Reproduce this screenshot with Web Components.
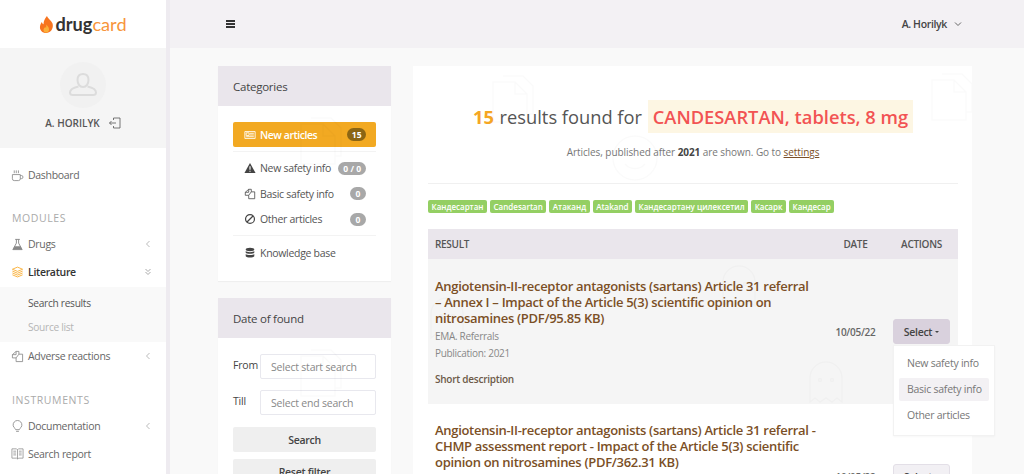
<!DOCTYPE html>
<html lang="en">
<head>
<meta charset="utf-8">
<title>Drugcard</title>
<style>
  html, body { margin: 0; height: 100%; overflow: hidden; }
  body { font-family: "Open Sans", "Noto Sans", sans-serif; color: #444; background: #f9f9f9; }
</style>
</head>
<body>
<dc-app>
  <dc-sidebar slot="side"></dc-sidebar>
  <dc-topbar slot="top"></dc-topbar>
  <dc-filters slot="filters"></dc-filters>
  <dc-results slot="results"></dc-results>
</dc-app>

<script>
// icons are all 14x14 viewbox, drawn with currentColor
const ICONS = {
  cup: '<path d="M1.500 6h8.500v4.500a2 2 0 0 1-2 2H3.500a2 2 0 0 1-2-2zM10 7h1.200a1.600 1.600 0 0 1 0 3.400H10M3.500 1.500v3M5.700 1.500v3M8 1.500v3" fill="none" stroke="currentColor" stroke-width=".9"/>',
  flask: '<path d="M4.500 1.500h5M5.800 1.500v4L2 12.500h10L8.200 5.500v-4" fill="none" stroke="currentColor"/><path d="M4 9h6l2 3.500H2z" fill="currentColor"/>',
  layers: '<path d="M7 1.200l5.500 2.300L7 5.800 1.500 3.500zM1.500 5.500L7 7.800l5.500-2.300M1.500 7.500L7 9.800l5.500-2.300M1.500 9.500L7 11.800l5.500-2.300" fill="none" stroke="currentColor" stroke-width=".9"/>',
  copy: '<path d="M5.500 1.500h3v3h4v8h-7v-4h-4v-3.500zM5.500 1.500v3.500h-4M8.500 4.500l-3 4" fill="none" stroke="currentColor" stroke-width=".9"/>',
  bulb: '<path d="M4.500 10.300a4.700 4.700 0 1 1 5 0c-.4.300-.5.700-.5 1.200H5c0-.5-.1-.9-.5-1.200zM5.500 13.300h3" fill="none" stroke="currentColor" stroke-width=".9"/>',
  book: '<path d="M1 2h5l1 1 1-1h5v10H8l-1 1-1-1H1zM7 3v10M2.500 4.500h3M2.500 6.500h3M2.500 8.500h3M8.500 4.500h3M8.500 6.500h3M8.500 8.500h3" fill="none" stroke="currentColor" stroke-width=".8"/>',
  news: '<path d="M1 3h12v8H1z" fill="none" stroke="currentColor"/><path d="M2.500 4.500h3.500v3H2.500zM7 5h4.500M7 7h4.500M2.500 9h9" stroke="currentColor" fill="none"/>',
  warn: '<path d="M7 1.200l6.500 11.600H.5z" fill="currentColor"/><path d="M7 5v4M7 10.200v1.200" stroke="#fff" stroke-width="1.300"/>',
  ban: '<circle cx="7" cy="7" r="5.200" fill="none" stroke="currentColor" stroke-width="1.400"/><path d="M3.500 10.500l7-7" stroke="currentColor" stroke-width="1.400"/>',
  db: '<ellipse cx="7" cy="3" rx="5" ry="2" fill="currentColor"/><path d="M2 4.800c1 1.600 9 1.600 10 0v2c-1 1.600-9 1.600-10 0zM2 8.200c1 1.600 9 1.600 10 0v2.500c-1 2-9 2-10 0z" fill="currentColor"/>'
};
const icon = (name, size = 14) =>
  `<svg width="${size}" height="${size}" viewBox="0 0 14 14" aria-hidden="true">${ICONS[name]}</svg>`;

// faint doodles printed over the cards, same colour on white and on grey rows
const DOODLE = (x, y) => `<path transform="translate(${x} ${y})" d="M0 6h22l12 12v28H0zM22 6v12h12M10 0h20l10 10v28h-6"/>`;
const GHOST = (x, y) => `<path transform="translate(${x} ${y})" d="M0 40V16a16 16 0 0 1 32 0v24l-5-4-5 4-6-4-6 4-5-4z"/><circle transform="translate(${x} ${y})" cx="10" cy="18" r="1.500"/><circle transform="translate(${x} ${y})" cx="22" cy="18" r="1.500"/>`;

class DcApp extends HTMLElement {
  constructor() {
    super();
    this.attachShadow({ mode: "open" });
  }
  connectedCallback() {
    this.shadowRoot.innerHTML = `
      <style>
        :host { display: grid; grid-template-columns: 170px 1fr; height: 100vh; overflow: hidden; }
        .main { min-width: 0; overflow: hidden; }
        .content { display: grid; grid-template-columns: 173px 559px; gap: 22px; padding: 18px 0 0 48px; }
        .col { min-width: 0; }
      </style>
      <slot name="side"></slot>
      <div class="main">
        <slot name="top"></slot>
        <div class="content">
          <div class="col"><slot name="filters"></slot></div>
          <div class="col"><slot name="results"></slot></div>
        </div>
      </div>`;
  }
}

class DcSidebar extends HTMLElement {
  constructor() {
    super();
    this.attachShadow({ mode: "open" });
  }
  connectedCallback() {
    this.shadowRoot.innerHTML = `
      <style>
        :host { display: block; width: 166px; height: 100%; background: #fff; border-right: 4px solid #eeebf0; color: #666; overflow: hidden; }
        .logo { height: 48px; display: flex; align-items: center; justify-content: center; gap: 1px; font: 700 18.200px/1 Lato, "Open Sans", sans-serif; color: #333; box-sizing: border-box; }
        .logo b { font-weight: 400; color: #f7953b; }
        .user { height: 100px; background: #f5f5f5; box-sizing: border-box; padding-top: 14px; display: flex; flex-direction: column; align-items: center; }
        .avatar { width: 46px; height: 46px; border-radius: 50%; background: #f1f1f1; color: #dcdcdc; display: flex; align-items: center; justify-content: center; }
        .name { margin-top: 8px; font-size: 10px; font-weight: 600; color: #555; display: flex; align-items: center; gap: 9px; }
        .name svg { color: #555; }
        .label { font-size: 10.500px; color: #aaa; letter-spacing: .6px; padding-left: 12px; line-height: 14px; }
        .sub { background: #f9f9f9; margin-top: 1px; padding: 3.500px 0 2.500px 28px; }
        .sub div { line-height: 24.500px; color: #555; font-size: 10.200px; letter-spacing: -.3px; }
        .sub div + div { color: #b5b5b5; }
      </style>
      <div class="logo">
        <svg width="15" height="17" viewBox="0 0 17 20"><path d="M9 0c1 3 5 5 6.500 8.500 1.500 4-.5 11-7 11.500C3 20 .5 16 .8 12.500 1 10 2.500 8 3 7c.5 1.500 1 2.300 2 2.800C5 6 6.500 3 9 0z" fill="#f7741f"/><path d="M8.500 10c.5 1.500 3 3 3 5.500s-1.500 4-3.500 4-3.300-1.700-3-3.700c.3-1.500 1.500-2.300 2-3 .3.500.600 1 1 1.200.2-1.300.2-2.600.5-4z" fill="#fbb03b"/></svg>
        <span>drug<b>card</b></span>
      </div>
      <div class="user">
        <div class="avatar"><svg width="30" height="30" viewBox="0 0 30 30" fill="none" stroke="currentColor" stroke-width="2"><path d="M15 4c3.500 0 5.500 2.500 5.500 6S18.500 17 15 17s-5.500-3.500-5.500-7S11.500 4 15 4zM10.500 16.500C6 17.500 2 19 2 22.500c0 2 1 2.500 3 2.500h20c2 0 3-.5 3-2.500 0-3.500-4-5-8.500-6"/></svg></div>
        <div class="name">A. HORILYK <svg width="12" height="12" viewBox="0 0 12 12" fill="none" stroke="currentColor" stroke-width=".8"><path d="M4.500 3V1h6.500v10H4.500V9M.5 6H7M2.500 4L.5 6l2 2"/></svg></div>
      </div>
      <dc-nav-item icon="cup" style="margin-top:13px">Dashboard</dc-nav-item>
      <div class="label" style="margin-top:22px;margin-bottom:5px">MODULES</div>
      <dc-nav-item icon="flask" arrow="left">Drugs</dc-nav-item>
      <dc-nav-item icon="layers" arrow="down" active>Literature</dc-nav-item>
      <div class="sub"><div>Search results</div><div>Source list</div></div>
      <dc-nav-item icon="copy" arrow="left">Adverse reactions</dc-nav-item>
      <div class="label" style="margin-top:23px;margin-bottom:4.500px">INSTRUMENTS</div>
      <dc-nav-item icon="bulb" arrow="left">Documentation</dc-nav-item>
      <dc-nav-item icon="book">Search report</dc-nav-item>`;
  }
}

class DcNavItem extends HTMLElement {
  constructor() {
    super();
    this.attachShadow({ mode: "open" });
  }
  connectedCallback() {
    const arrow = this.getAttribute("arrow");
    const glyph = arrow === "left"
      ? '<svg width="8" height="8" viewBox="0 0 8 8" fill="none" stroke="#bbb"><path d="M5.500 1L2.500 4l3 3"/></svg>'
      : arrow === "down"
        ? '<svg width="8" height="8" viewBox="0 0 8 8" fill="none" stroke="#aaa"><path d="M1.500 1L4 3.500 6.500 1M1.500 4L4 6.500 6.500 4"/></svg>'
        : "";
    this.shadowRoot.innerHTML = `
      <style>
        :host { display: flex; align-items: center; height: 28px; padding: 0 14px 0 11px; font-size: 10.500px; letter-spacing: -.3px; color: #666; }
        :host([active]) { color: #333; font-weight: 600; }
        :host([active]) .ic { color: #f9a825; }
        .ic { width: 17px; display: flex; color: #888; }
        .tx { flex: 1; }
      </style>
      <span class="ic">${icon(this.getAttribute("icon"), 13)}</span>
      <span class="tx"><slot></slot></span>${glyph}`;
  }
}

class DcTopbar extends HTMLElement {
  constructor() {
    super();
    this.attachShadow({ mode: "open" });
  }
  connectedCallback() {
    this.shadowRoot.innerHTML = `
      <style>
        :host { display: flex; align-items: center; justify-content: space-between; height: 48px; background: #f3f1f4; padding: 0 62px 0 56px; font-size: 10.500px; letter-spacing: -.35px; font-weight: 600; color: #444; }
        .burger { display: grid; gap: 1px; width: 9px; margin-bottom: 1px; }
        .burger i { height: 2px; background: #333; }
        .user { display: flex; align-items: center; gap: 7px; }
      </style>
      <div class="burger"><i></i><i></i><i></i></div>
      <div class="user">A. Horilyk <svg width="8" height="8" viewBox="0 0 8 8" fill="none" stroke="#666"><path d="M1 2.500L4 5.500l3-3"/></svg></div>`;
  }
}

class DcPanel extends HTMLElement {
  constructor() {
    super();
    this.attachShadow({ mode: "open" });
  }
  connectedCallback() {
    this.shadowRoot.innerHTML = `
      <style>
        :host { display: block; position: relative; background: #fff; box-shadow: 0 1px 1px rgba(0,0,0,.04); }
        header { height: 40px; background: #eae6ec; display: flex; align-items: center; padding-left: 15px; font-size: 11.500px; letter-spacing: -.25px; color: #444; }
        .body { padding: 16px 15px 0; }
        .doodle { position: absolute; left: 81px; top: 51px; width: 46px; height: 50px; fill: none; stroke: rgba(0,0,0,.018); stroke-width: 1.500; pointer-events: none; }
      </style>
      <header>${this.getAttribute("title")}</header>
      <div class="body"><slot></slot></div>
      <svg class="doodle" viewBox="0 0 46 50">${DOODLE(2, 1)}</svg>`;
  }
}

class DcCategory extends HTMLElement {
  constructor() {
    super();
    this.attachShadow({ mode: "open" });
  }
  connectedCallback() {
    const badge = this.getAttribute("badge");
    this.shadowRoot.innerHTML = `
      <style>
        :host { display: flex; align-items: center; height: 25.500px; padding: 0 10px 0 11px; font-size: 10.500px; letter-spacing: -.3px; color: #555; border-radius: 2px; }
        :host([active]) { height: 25px; background: #f2a922; color: #fff; font-weight: 600; letter-spacing: -.45px; }
        .ic { width: 16px; display: flex; color: #444; }
        :host([active]) .ic { color: #fff; }
        .tx { flex: 1; white-space: nowrap; }
        .bd { background: #a8a8a8; color: #fff; font-size: 8.500px; letter-spacing: 0; font-weight: 700; line-height: 13px; min-width: 6px; text-align: center; padding: 0 5px; border-radius: 7px; }
        :host([active]) .bd { background: #8b6514; padding: 0 4.500px; }
      </style>
      ${this.hasAttribute("icon") ? `<span class="ic">${icon(this.getAttribute("icon"), 12)}</span>` : ""}
      <span class="tx"><slot></slot></span>
      ${badge ? `<span class="bd">${badge}</span>` : ""}`;
  }
}

class DcField extends HTMLElement {
  constructor() {
    super();
    this.attachShadow({ mode: "open" });
  }
  connectedCallback() {
    this.shadowRoot.innerHTML = `
      <style>
        :host { display: flex; height: 25px; font-size: 10.500px; letter-spacing: -.2px; color: #444; }
        label { width: 27px; line-height: 23px; }
        input { flex: 1; min-width: 0; width: 0; box-sizing: border-box; border: 1px solid #e8e8ee; border-radius: 2px; padding: 0 10px; font: inherit; letter-spacing: inherit; background: #fff; outline: none; }
        input::placeholder { color: #888; opacity: 1; }
      </style>
      <label>${this.getAttribute("label")}</label>
      <input placeholder="${this.getAttribute("placeholder")}">`;
  }
}

class DcButton extends HTMLElement {
  constructor() {
    super();
    this.attachShadow({ mode: "open" });
  }
  connectedCallback() {
    this.shadowRoot.innerHTML = `
      <style>
        :host { display: flex; align-items: center; justify-content: center; height: 25px; background: #efefef; border-radius: 2px; font-size: 10.500px; letter-spacing: -.3px; font-weight: 600; color: #444; }
      </style>
      <slot></slot>`;
  }
}

class DcFilters extends HTMLElement {
  constructor() {
    super();
    this.attachShadow({ mode: "open" });
  }
  connectedCallback() {
    this.shadowRoot.innerHTML = `
      <style>
        :host { display: block; }
        .rule { border-top: 1px solid #f3f3f3; margin-top: 4px; padding-top: 3.500px; }
        .rule.k { margin-top: 3px; padding-top: 4.500px; padding-bottom: 15px; }
        .stack { display: grid; grid-template-columns: minmax(0, 1fr); gap: 11px; }
        .btns { display: grid; gap: 7px; margin-top: 12px; }
        dc-panel + dc-panel { margin-top: 17px; }
      </style>
      <dc-panel title="Categories">
        <dc-category active icon="news" badge="15">New articles</dc-category>
        <div class="rule">
          <dc-category icon="warn" badge="0 / 0">New safety info</dc-category>
          <dc-category icon="copy" badge="0">Basic safety info</dc-category>
          <dc-category icon="ban" badge="0">Other articles</dc-category>
        </div>
        <div class="rule k"><dc-category icon="db">Knowledge base</dc-category></div>
      </dc-panel>
      <dc-panel title="Date of found">
        <div class="stack">
          <dc-field label="From" placeholder="Select start search"></dc-field>
          <dc-field label="Till" placeholder="Select end search"></dc-field>
        </div>
        <div class="btns"><dc-button>Search</dc-button><dc-button>Reset filter</dc-button></div>
      </dc-panel>`;
  }
}

class DcTag extends HTMLElement {
  constructor() {
    super();
    this.attachShadow({ mode: "open" });
  }
  connectedCallback() {
    this.shadowRoot.innerHTML = `
      <style>
        :host { display: inline-block; background: #94cf63; color: #fff; font-size: 8px; font-weight: 600; line-height: 13px; padding: 0 3.500px; border-radius: 2px; white-space: nowrap; }
      </style>
      <slot></slot>`;
  }
}

class DcResultRow extends HTMLElement {
  constructor() {
    super();
    this.attachShadow({ mode: "open" });
  }
  connectedCallback() {
    this.shadowRoot.innerHTML = `
      <style>
        :host { display: grid; grid-template-columns: 1fr 75px 65px; padding: 19px 0 17px 7px; position: relative; }
        :host([shaded]) { background: #f5f5f5; }
        h3 { margin: 0; padding-right: 1px; font-size: 13px; letter-spacing: -.3px; line-height: 16px; font-weight: 600; color: #7b4f26; }
        .date { font-size: 10px; letter-spacing: -.25px; font-weight: 600; color: #666; padding-top: 47px; text-align: center; white-space: nowrap; }
        .act { padding-top: 41px; position: relative; }
        .sel { display: flex; align-items: center; justify-content: center; box-sizing: border-box; gap: 3px; width: 57px; height: 25px; background: #d9d1dd; border: 1px solid #d9d1dd; border-radius: 3px; font-size: 10.500px; letter-spacing: -.3px; font-weight: 600; color: #444; }
        .sel::after { content: ""; border: 2.500px solid transparent; border-top-color: #444; border-bottom: 0; }
        :host(:not([shaded])) { padding-top: 18px; }
        :host(:not([shaded])) .act { padding-top: 42px; }
        :host(:not([shaded])) .date { padding-top: 48px; }
        :host(:not([shaded])) .sel { background: #f2f0f4; border-color: #e3dfe7; }
      </style>
      <div>
        <h3><slot name="title"></slot></h3>
        <slot name="details"></slot>
      </div>
      <div class="date"><slot name="date"></slot></div>
      <div class="act"><div class="sel">Select</div><slot name="menu"></slot></div>`;
  }
}

class DcMenu extends HTMLElement {
  constructor() {
    super();
    this.attachShadow({ mode: "open" });
  }
  connectedCallback() {
    this.shadowRoot.innerHTML = `
      <style>
        :host { display: block; position: absolute; top: 67px; left: 0; width: 102px; box-sizing: border-box; background: #fff; border: 1px solid #f2f2f2; padding: 6px 5px 8px; font-size: 10.500px; letter-spacing: -.25px; color: #777; z-index: 2; box-shadow: 0 1px 2px rgba(0,0,0,.03); }
        div { line-height: 23px; padding: 0 8px; margin-bottom: 3px; border-radius: 2px; white-space: nowrap; }
        div:last-child { margin-bottom: 0; }
        .on { background: #f3f1f4; }
      </style>
      <div>New safety info</div><div class="on">Basic safety info</div><div>Other articles</div>`;
  }
}

class DcResults extends HTMLElement {
  constructor() {
    super();
    this.attachShadow({ mode: "open" });
  }
  connectedCallback() {
    const tags = ["Кандесартан", "Candesartan", "Атаканд", "Atakand", "Кандесартану цилексетил", "Касарк", "Кандесар"];
    this.shadowRoot.innerHTML = `
      <style>
        :host { display: block; position: relative; background: #fff; padding: 0 14px 0 15px; height: 420px; }
        .top { text-align: center; padding-top: 34px; border-bottom: 1px solid #f0f0f0; height: 83px; }
        h1 { margin: 0; font-size: 18.300px; line-height: 33px; font-weight: 500; color: #555; white-space: nowrap; }
        h1 i { font-style: normal; color: #f5a623; font-weight: 700; margin-right: 1px; }
        h1 mark { background: #fdf6e3; color: #f25353; padding: 0 5px; margin-left: 1px; display: inline-block; font-weight: 600; }
        p { margin: 12px 0 0; font-size: 10px; letter-spacing: -.07px; color: #777; }
        p b { color: #444; }
        p a { color: #7b4f26; text-decoration: underline; }
        .tags { display: flex; gap: 3px; margin-top: 16px; }
        .thead { display: grid; grid-template-columns: 1fr 75px 65px; height: 30px; align-items: center; margin-top: 16px; background: #eae6ec; font-size: 10px; letter-spacing: -.3px; font-weight: 600; color: #555; padding-left: 7px; }
        .thead span + span { text-align: center; }
        .thead span:last-child { padding-right: 8px; }
        .info { font-size: 10px; letter-spacing: -.3px; color: #888; line-height: 17px; margin-top: 2px; }
        .short { font-size: 10px; letter-spacing: -.25px; font-weight: 600; color: #6d5a48; margin-top: 9px; line-height: 16px; }
        .doodles { position: absolute; left: 0; top: 0; width: 559px; height: 408px; pointer-events: none; z-index: 1; fill: none; stroke: rgba(0,0,0,.018); stroke-width: 1.500; }
      </style>
      <div class="top">
        <h1><i>15</i> results found for <mark>CANDESARTAN, tablets, 8 mg</mark></h1>
        <p>Articles, published after <b>2021</b> are shown. Go to <a>settings</a></p>
      </div>
      <div class="tags">${tags.map(t => `<dc-tag>${t}</dc-tag>`).join("")}</div>
      <div class="thead"><span>RESULT</span><span>DATE</span><span>ACTIONS</span></div>
      <dc-result-row shaded>
        <span slot="title">Angiotensin-II-receptor antagonists (sartans) Article 31 referral – Annex I – Impact of the Article 5(3) scientific opinion on nitrosamines (PDF/95.85 KB)</span>
        <div slot="details">
          <div class="info">EMA. Referrals<br>Publication: 2021</div>
          <div class="short">Short description</div>
        </div>
        <span slot="date">10/05/22</span>
        <dc-menu slot="menu"></dc-menu>
      </dc-result-row>
      <dc-result-row>
        <span slot="title">Angiotensin-II-receptor antagonists (sartans) Article 31 referral - CHMP assessment report - Impact of the Article 5(3) scientific opinion on nitrosamines (PDF/362.31 KB)</span>
        <span slot="date">10/05/22</span>
      </dc-result-row>
      <svg class="doodles" viewBox="0 0 559 408">
        ${DOODLE(80, 10)}${DOODLE(519, 8)}
        <circle cx="222" cy="92" r="22"/><path d="M212 98c5 6 15 6 20 0"/>
        ${GHOST(397, 296)}${GHOST(18, 232)}${GHOST(310, 200)}
      </svg>`;
  }
}

customElements.define("dc-app", DcApp);
customElements.define("dc-sidebar", DcSidebar);
customElements.define("dc-nav-item", DcNavItem);
customElements.define("dc-topbar", DcTopbar);
customElements.define("dc-panel", DcPanel);
customElements.define("dc-category", DcCategory);
customElements.define("dc-field", DcField);
customElements.define("dc-button", DcButton);
customElements.define("dc-filters", DcFilters);
customElements.define("dc-tag", DcTag);
customElements.define("dc-result-row", DcResultRow);
customElements.define("dc-menu", DcMenu);
customElements.define("dc-results", DcResults);
</script>
</body>
</html>
